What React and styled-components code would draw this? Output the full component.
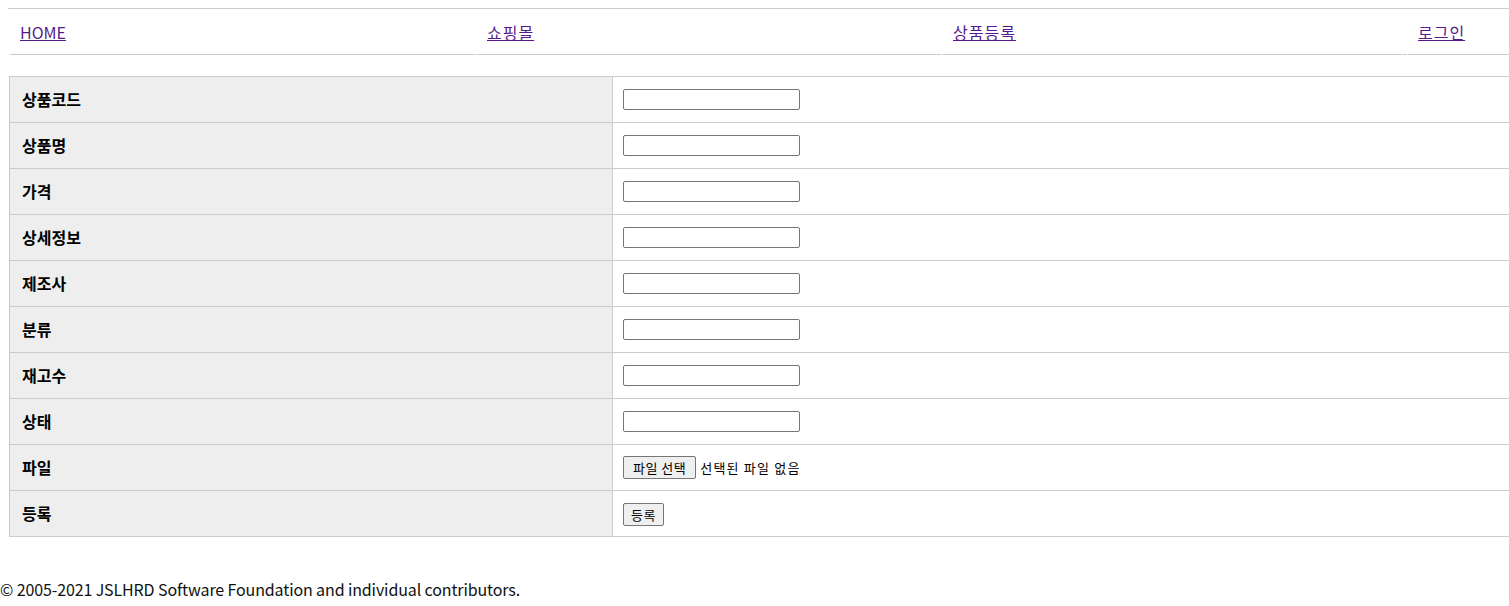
import React from 'react'
import styled, { createGlobalStyle } from 'styled-components'

const GlobalStyle = createGlobalStyle`
  html, body {
    margin: 0;
    background: #fff;
  }
  body {
    font-family: 'Noto Sans CJK KR', 'Noto Sans', sans-serif;
    font-size: 16px;
    color: #000;
  }
`

const Page = styled.div`
  padding: 8px 0 0 8px;
`

const Nav = styled.nav`
  display: flex;
  gap: 1px;
  border-top: 1px solid #ccc;
  padding-left: 2px;
`

const NavCell = styled.div`
  flex: ${(p) => (p.$last ? '1' : '0 0 465px')};
  height: 46px;
  box-sizing: border-box;
  display: flex;
  align-items: center;
  padding-left: ${(p) => p.$pad}px;
  border-bottom: 1px solid #ccc;
`

const NavLink = styled.a`
  color: #551a8b;
  text-decoration: underline;
  line-height: 1;
  letter-spacing: ${(p) => (p.$ko ? '1px' : '0')};
`

const Table = styled.table`
  margin: 21px 0 0 1px;
  width: calc(100% - 1px);
  border-collapse: collapse;
  border: 1px solid #ccc;
  border-right: none;
`

const Row = styled.tr`
  height: 46px;
`

const Label = styled.th`
  width: 578px;
  background: #eee;
  border: 1px solid #ccc;
  text-align: left;
  padding: 0 12px 1px;
  font-weight: bold;
  font-size: 16px;
`

const Cell = styled.td`
  border: 1px solid #ccc;
  border-right: none;
  padding: 0 10px;
`

const Field = styled.input`
  box-sizing: border-box;
  width: 177px;
  height: 21px;
  border: 1px solid #767676;
  border-radius: 2px;
  display: block;
`

const Button = styled.button`
  box-sizing: border-box;
  height: 23px;
  padding: 0 ${(p) => p.$pad || 8}px;
  background: #efefef;
  border: 1px solid #767676;
  border-radius: 2px;
  font-family: 'Noto Sans CJK KR', sans-serif;
  font-size: 13px;
  letter-spacing: 0.5px;
  color: #000;
  line-height: 1;
`

const FileRow = styled.div`
  display: flex;
  align-items: center;
  gap: 4px;
`

const FileName = styled.span`
  font-size: 13px;
  letter-spacing: 1.2px;
`

const Footer = styled.footer`
  margin-top: 40px;
  font-size: 16px;
  letter-spacing: -0.12px;
  color: #111;
`

const fields = ['상품코드', '상품명', '가격', '상세정보', '제조사', '분류', '재고수', '상태']

const links = [
  { text: 'HOME', pad: 10 },
  { text: '쇼핑몰', pad: 11, ko: true },
  { text: '상품등록', pad: 11, ko: true },
  { text: '로그인', pad: 10, ko: true, last: true },
]

export default function App() {
  return (
    <>
      <GlobalStyle />
      <Page>
        <Nav>
          {links.map((l) => (
            <NavCell key={l.text} $pad={l.pad} $last={l.last}>
              <NavLink href="#" $ko={l.ko}>
                {l.text}
              </NavLink>
            </NavCell>
          ))}
        </Nav>
        <Table>
          <tbody>
            {fields.map((f) => (
              <Row key={f}>
                <Label>{f}</Label>
                <Cell>
                  <Field type="text" />
                </Cell>
              </Row>
            ))}
            <Row>
              <Label>파일</Label>
              <Cell>
                <FileRow>
                  <Button type="button" $pad={9}>
                    파일 선택
                  </Button>
                  <FileName>선택된 파일 없음</FileName>
                </FileRow>
              </Cell>
            </Row>
            <Row>
              <Label>등록</Label>
              <Cell>
                <Button type="submit" $pad={7}>
                  등록
                </Button>
              </Cell>
            </Row>
          </tbody>
        </Table>
      </Page>
      <Footer>© 2005-2021 JSLHRD Software Foundation and individual contributors.</Footer>
    </>
  )
}
